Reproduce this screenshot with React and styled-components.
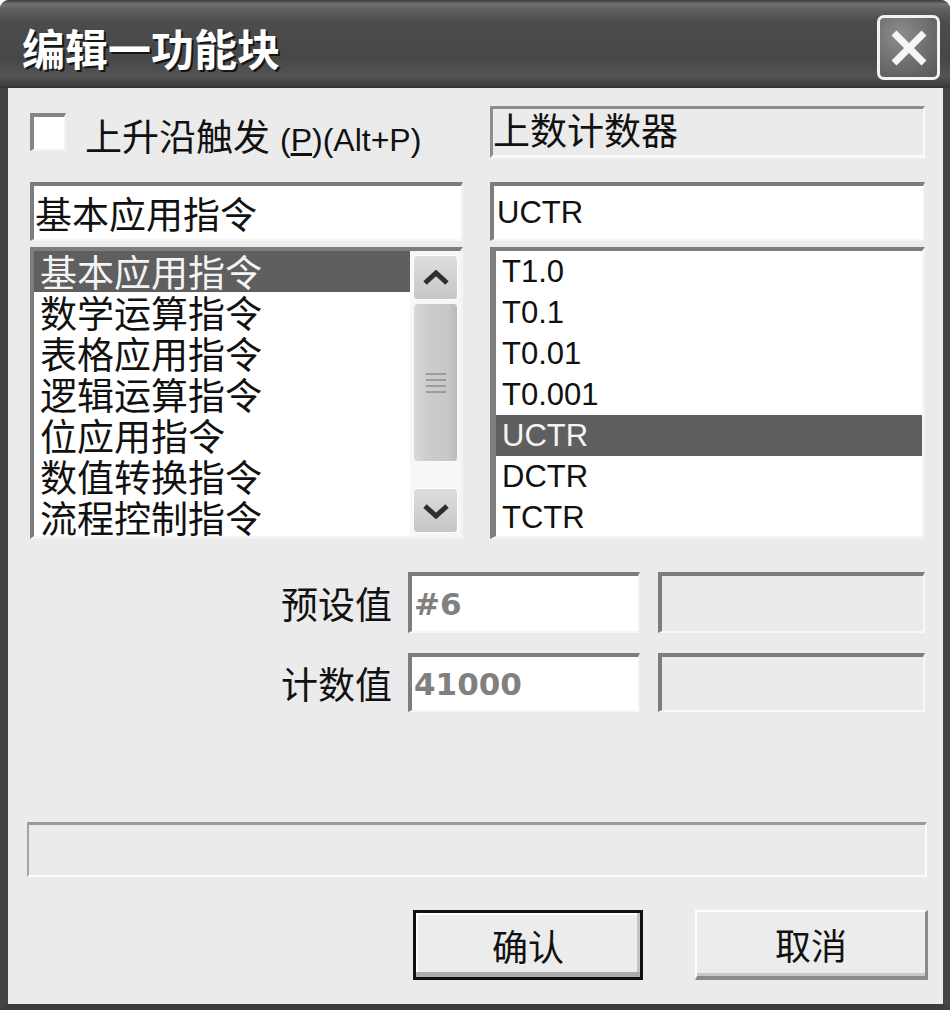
import React from "react";
import styled, { createGlobalStyle } from "styled-components";

const cjk = `"Noto Sans CJK SC", "Liberation Sans", sans-serif`;
const latin = `"Liberation Sans", "Noto Sans CJK SC", sans-serif`;

const GlobalStyle = createGlobalStyle`
  html, body { margin: 0; padding: 0; background: #ffffff; }
  * { box-sizing: border-box; }
`;

const Window = styled.div`
  width: 950px;
  height: 1010px;
  display: flex;
  flex-direction: column;
  overflow: hidden;
  border-radius: 9px 9px 0 0;
  background: #464646;
`;

const TitleBar = styled.div`
  height: 88px;
  flex-shrink: 0;
  display: flex;
  align-items: flex-start;
  padding: 0 10px 0 22px;
  background: linear-gradient(
    to bottom,
    #3a3a3a 0px,
    #727272 4px,
    #5e5e5e 10px,
    #4c4c4c 22px,
    #474747 58px,
    #545454 76px,
    #404040 85px,
    #333333 88px
  );
`;

const Title = styled.div`
  margin-top: 20px;
  font-family: ${cjk};
  font-weight: 700;
  font-size: 43px;
  line-height: 54px;
  color: #ffffff;
  text-shadow: 2px 2px 0 #161616;
`;

const CloseButton = styled.div`
  margin-left: auto;
  margin-top: 15px;
  width: 63px;
  height: 65px;
  border: 3px solid #f2f2f2;
  border-radius: 7px;
  background: radial-gradient(circle at 35% 30%, #8e8e8e, #6a6a6a 60%, #575757);
  display: flex;
  align-items: center;
  justify-content: center;
`;

const Body = styled.div`
  flex: 1;
  display: flex;
  flex-direction: column;
  background: #ebebeb;
  border-left: 8px solid #434343;
  border-right: 7px solid #454545;
  border-bottom: 6px solid #3d3d3d;
  padding: 18px 18px 0 22px;
`;

const TopGrid = styled.div`
  display: grid;
  grid-template-columns: 433px 435px;
  column-gap: 27px;
  align-items: start;
`;

const CheckRow = styled.label`
  height: 52px;
  display: flex;
  align-items: center;
  gap: 19px;
`;

const CheckBox = styled.span`
  width: 36px;
  height: 38px;
  background: #ffffff;
  border-top: 4px solid #858585;
  border-left: 4px solid #858585;
  border-right: 2px solid #f4f4f4;
  border-bottom: 2px solid #f4f4f4;
`;

const CheckText = styled.span`
  font-family: ${cjk};
  font-size: 37px;
  line-height: 44px;
  color: #111111;
  margin-top: 10px;
`;

const Hotkey = styled.span`
  font-family: ${latin};
  font-size: 32px;
  margin-left: 10px;
`;

const StaticBox = styled.div`
  height: 52px;
  border-top: 3px solid #8e8e8e;
  border-left: 3px solid #8e8e8e;
  border-right: 2px solid #fafafa;
  border-bottom: 3px solid #fafafa;
  font-family: ${cjk};
  font-size: 37px;
  line-height: 40px;
  color: #111111;
`;

const TextInput = styled.div`
  margin-top: 24px;
  height: 59px;
  display: flex;
  align-items: center;
  background: #ffffff;
  border-top: 4px solid #7d7d7d;
  border-left: 4px solid #7d7d7d;
  border-right: 2px solid #f2f2f2;
  border-bottom: 2px solid #f6f6f6;
  padding-left: ${(p) => (p.$latin ? "3px" : "1px")};
  font-family: ${(p) => (p.$latin ? latin : cjk)};
  font-size: ${(p) => (p.$latin ? "31px" : "37px")};
  color: #111111;
`;

const ListBox = styled.div`
  margin-top: 6px;
  height: 292px;
  display: flex;
  background: #ffffff;
  border-top: 4px solid #7d7d7d;
  border-left: ${(p) => (p.$wide ? "6px" : "4px")} solid #7d7d7d;
  border-right: 3px solid #f4f4f4;
  border-bottom: 3px solid #f4f4f4;
`;

const Items = styled.div`
  flex: 1;
  display: flex;
  flex-direction: column;
`;

const Item = styled.div`
  height: 41px;
  line-height: 41px;
  padding-left: ${(p) => (p.$latin ? "6px" : "6px")};
  font-family: ${(p) => (p.$latin ? latin : cjk)};
  font-size: ${(p) => (p.$latin ? "31px" : "37px")};
  white-space: nowrap;
  background: ${(p) => (p.$selected ? "#5f5f5f" : "transparent")};
  color: ${(p) => (p.$selected ? "#f4f4f4" : "#111111")};
`;

const ScrollBar = styled.div`
  width: 50px;
  display: flex;
  flex-direction: column;
  gap: 3px;
  padding: 4px 2px 3px 3px;
  background: #f7f7f7;
`;

const ScrollButton = styled.div`
  height: 45px;
  flex-shrink: 0;
  border: 1px solid #ffffff;
  border-radius: 4px;
  background: linear-gradient(to bottom, #dedede, #c6c6c6);
  display: flex;
  align-items: center;
  justify-content: center;
`;

const Thumb = styled.div`
  height: 159px;
  flex-shrink: 0;
  border: 1px solid #fafafa;
  border-radius: 4px;
  background: linear-gradient(to right, #d9d9d9, #cdcdcd 30%, #c8c8c8 80%, #bababa);
  display: flex;
  align-items: center;
  justify-content: center;
`;

const Track = styled.div`
  flex: 1;
`;

const ValueRows = styled.div`
  margin-top: 33px;
  display: flex;
  flex-direction: column;
  gap: 20px;
`;

const ValueRow = styled.div`
  height: ${(p) => p.$h}px;
  display: flex;
  justify-content: flex-end;
  align-items: stretch;
`;

const ValueLabel = styled.div`
  margin-right: 16px;
  align-self: center;
  font-family: ${cjk};
  font-size: 37px;
  line-height: 44px;
  color: #111111;
`;

const ValueInput = styled.div`
  width: 232px;
  margin-right: 18px;
  display: flex;
  align-items: center;
  padding-left: 2px;
  background: #ffffff;
  border-top: 4px solid #7d7d7d;
  border-left: 4px solid #7d7d7d;
  border-right: 2px solid #f2f2f2;
  border-bottom: 2px solid #f6f6f6;
  font-family: "DejaVu Sans", "Liberation Sans", sans-serif;
  font-weight: 700;
  font-size: 31px;
  color: #808080;
`;

const DisabledBox = styled.div`
  width: 267px;
  background: #ebebeb;
  border-top: 4px solid #7d7d7d;
  border-left: 4px solid #7d7d7d;
  border-right: 2px solid #f8f8f8;
  border-bottom: 2px solid #f8f8f8;
`;

const StatusBox = styled.div`
  margin: 110px -2px 0 -3px;
  height: 55px;
  border-top: 3px solid #9a9a9a;
  border-left: 2px solid #a5a5a5;
  border-right: 2px solid #fdfdfd;
  border-bottom: 2px solid #fdfdfd;
`;

const ButtonRow = styled.div`
  margin: 33px -3px 0 0;
  display: flex;
  justify-content: flex-end;
  gap: 52px;
`;

const Button = styled.div`
  width: ${(p) => (p.$default ? "230px" : "233px")};
  height: 70px;
  display: flex;
  align-items: center;
  justify-content: center;
  font-family: ${cjk};
  font-size: 36px;
  color: #111111;
  background: #ececec;
  border-style: solid;
  border-width: ${(p) => (p.$default ? "3px" : "2px 3px 4px 2px")};
  border-color: ${(p) => (p.$default ? "#111111" : "#ffffff #8a8a8a #8a8a8a #ffffff")};
  box-shadow: ${(p) =>
    p.$default ? "inset 0 -5px 0 #acacac, inset -3px 0 0 #c4c4c4, inset 2px 2px 0 #ffffff" : "inset 0 -3px 0 #c8c8c8"};
`;

const Chevron = ({ down }) => (
  <svg width="28" height="16" viewBox="0 0 28 16">
    <polyline
      points={down ? "3,3 14,13 25,3" : "3,13 14,3 25,13"}
      fill="none"
      stroke="#2e2e2e"
      strokeWidth="5"
    />
  </svg>
);

const Grip = () => (
  <svg width="20" height="22" viewBox="0 0 20 22">
    {[1, 7, 13, 19].map((y) => (
      <rect key={y} x="0" y={y} width="20" height="2" fill="#9c9c9c" />
    ))}
  </svg>
);

const categories = ["基本应用指令", "数学运算指令", "表格应用指令", "逻辑运算指令", "位应用指令", "数值转换指令", "流程控制指令"];
const blocks = ["T1.0", "T0.1", "T0.01", "T0.001", "UCTR", "DCTR", "TCTR"];

export default function App() {
  return (
    <>
      <GlobalStyle />
      <Window>
        <TitleBar>
          <Title>编辑一功能块</Title>
          <CloseButton>
            <svg width="38" height="36" viewBox="0 0 38 36">
              <path d="M4 3 L34 33 M34 3 L4 33" stroke="#f6f6f6" strokeWidth="7" />
            </svg>
          </CloseButton>
        </TitleBar>
        <Body>
          <TopGrid>
            <CheckRow>
              <CheckBox />
              <CheckText>
                上升沿触发
                <Hotkey>
                  (<u>P</u>)(Alt+P)
                </Hotkey>
              </CheckText>
            </CheckRow>
            <StaticBox>上数计数器</StaticBox>
            <TextInput>基本应用指令</TextInput>
            <TextInput $latin>UCTR</TextInput>
            <ListBox>
              <Items>
                {categories.map((c, i) => (
                  <Item key={c} $selected={i === 0}>
                    {c}
                  </Item>
                ))}
              </Items>
              <ScrollBar>
                <ScrollButton>
                  <Chevron />
                </ScrollButton>
                <Thumb>
                  <Grip />
                </Thumb>
                <Track />
                <ScrollButton>
                  <Chevron down />
                </ScrollButton>
              </ScrollBar>
            </ListBox>
            <ListBox $wide>
              <Items>
                {blocks.map((b) => (
                  <Item key={b} $latin $selected={b === "UCTR"}>
                    {b}
                  </Item>
                ))}
              </Items>
            </ListBox>
          </TopGrid>
          <ValueRows>
            <ValueRow $h={61}>
              <ValueLabel>预设值</ValueLabel>
              <ValueInput>#6</ValueInput>
              <DisabledBox />
            </ValueRow>
            <ValueRow $h={59}>
              <ValueLabel>计数值</ValueLabel>
              <ValueInput>41000</ValueInput>
              <DisabledBox />
            </ValueRow>
          </ValueRows>
          <StatusBox />
          <ButtonRow>
            <Button $default>确认</Button>
            <Button>取消</Button>
          </ButtonRow>
        </Body>
      </Window>
    </>
  );
}
